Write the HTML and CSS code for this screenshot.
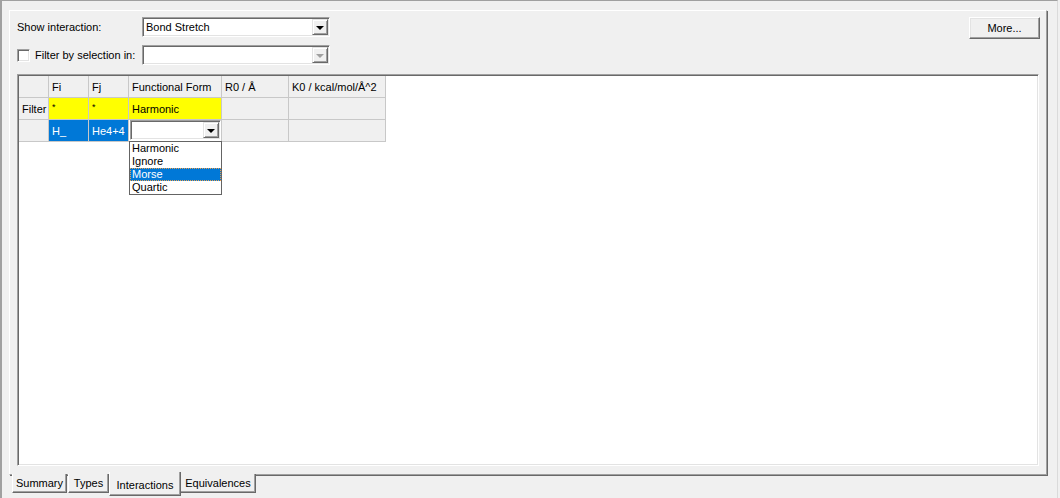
FILE: index.html
```html
<!doctype html>
<html lang="en">

<head>
    <meta charset="UTF-8">
    <title>Interactions</title>
    <link rel="stylesheet" href="styles.css">
</head>

<body>
    <div class="frame">
        <div class="tab-page">
            <div class="form-row">
                <label class="field-label">Show interaction:</label>
                <div class="combo">
                    <span class="combo-text">Bond Stretch</span>
                    <span class="combo-btn"><span class="arrow"></span></span>
                </div>
                <button class="btn more">More...</button>
            </div>
            <div class="form-row second">
                <span class="checkbox"></span>
                <label class="field-label short">Filter by selection in:</label>
                <div class="combo disabled">
                    <span class="combo-text"></span>
                    <span class="combo-btn"><span class="arrow"></span></span>
                </div>
            </div>

            <div class="grid-box">
                <table class="grid">
                    <tr class="head">
                        <td class="c0"></td>
                        <td class="c1">Fi</td>
                        <td class="c2">Fj</td>
                        <td class="c3">Functional Form</td>
                        <td class="c4">R0 / Å</td>
                        <td class="c5">K0 / kcal/mol/Å^2</td>
                    </tr>
                    <tr>
                        <td class="fixed">Filter</td>
                        <td class="filter"><span class="star">*</span></td>
                        <td class="filter"><span class="star">*</span></td>
                        <td class="filter">Harmonic</td>
                        <td class="fixed"></td>
                        <td class="fixed"></td>
                    </tr>
                    <tr>
                        <td class="fixed"></td>
                        <td class="selected">H_</td>
                        <td class="selected">He4+4</td>
                        <td class="editor">
                            <div class="cell-combo">
                                <span class="combo-text"></span>
                                <span class="combo-btn"><span class="arrow"></span></span>
                            </div>
                            <ul class="drop-list">
                                <li>Harmonic</li>
                                <li>Ignore</li>
                                <li class="hot">Morse</li>
                                <li>Quartic</li>
                            </ul>
                        </td>
                        <td class="fixed"></td>
                        <td class="fixed"></td>
                    </tr>
                </table>
            </div>
        </div>

        <ul class="tabs">
            <li class="tab t-summary">Summary</li>
            <li class="tab t-types">Types</li>
            <li class="tab t-inter active">Interactions</li>
            <li class="tab t-equiv">Equivalences</li>
        </ul>
    </div>
</body>

</html>
```

FILE: styles.css
```css
*,
*:after,
*:before {
    box-sizing: border-box;
    padding: 0;
    margin: 0;
}

body {
    font: 11px "Liberation Sans", Arial, sans-serif;
    color: #000;
    background: #f0f0f0;
    width: 1060px;
    height: 498px;
    overflow: hidden;
}

ul {
    list-style: none;
}

.frame {
    height: 498px;
    border-top: 1px solid #a0a0a0;
    border-left: 2px solid #a0a0a0;
    border-right: 1px solid #dadada;
    width: 1058px;
}

/* the page of the tab control */
.tab-page {
    margin: 9px 0 0 7px;
    width: 1038px;
    height: 465px;
    border-top: 1px solid #fff;
    border-left: 1px solid #fff;
    border-right: 1px solid #a0a0a0;
    border-bottom: 1px solid #a0a0a0;
    box-shadow: 1px 1px 0 #696969;
    padding: 6px 6px 0 7px;
}

.form-row {
    display: flex;
    align-items: center;
    height: 20px;
}

.form-row.second {
    margin-top: 8px;
}

.field-label {
    width: 125px;
}

.field-label.short {
    width: 107px;
}

.combo {
    position: relative;
    width: 188px;
    height: 20px;
    background: #fff;
    border-top: 1px solid #a0a0a0;
    border-left: 1px solid #a0a0a0;
    border-right: 1px solid #fff;
    border-bottom: 1px solid #fff;
    box-shadow: inset 1px 1px 0 #696969, inset -1px -1px 0 #e3e3e3;
    display: flex;
    align-items: center;
}

.combo-text {
    flex: 1;
    padding-left: 3px;
}

.combo-btn {
    width: 16px;
    height: 16px;
    margin-right: 1px;
    background: #f0f0f0;
    border-top: 1px solid #e3e3e3;
    border-left: 1px solid #e3e3e3;
    border-right: 1px solid #696969;
    border-bottom: 1px solid #696969;
    box-shadow: inset 1px 1px 0 #fff, inset -1px -1px 0 #a0a0a0;
    display: flex;
    align-items: center;
    justify-content: center;
}

.arrow {
    width: 0;
    height: 0;
    border-left: 4px solid transparent;
    border-right: 4px solid transparent;
    border-top: 4px solid #000;
    margin-top: 1px;
}

.combo.disabled .arrow {
    border-top-color: #a0a0a0;
}

.btn {
    font: 11px "Liberation Sans", Arial, sans-serif;
    background: #f0f0f0;
    border-top: 1px solid #fff;
    border-left: 1px solid #fff;
    border-right: 1px solid #696969;
    border-bottom: 1px solid #696969;
    box-shadow: inset -1px -1px 0 #a0a0a0, inset 1px 1px 0 #e3e3e3;
}

.more {
    width: 71px;
    height: 22px;
    margin-left: auto;
    align-self: flex-start;
}

.checkbox {
    width: 13px;
    height: 13px;
    background: #fff;
    border-top: 1px solid #a0a0a0;
    border-left: 1px solid #a0a0a0;
    border-right: 1px solid #fff;
    border-bottom: 1px solid #fff;
    box-shadow: inset 1px 1px 0 #696969, inset -1px -1px 0 #e3e3e3;
    margin-right: 5px;
}

/* grid */
.grid-box {
    margin-top: 9px;
    width: 1022px;
    height: 392px;
    background: #fff;
    border-top: 1px solid #a0a0a0;
    border-left: 1px solid #a0a0a0;
    border-right: 1px solid #fff;
    border-bottom: 1px solid #fff;
    box-shadow: inset 1px 1px 0 #696969, inset -1px -1px 0 #e3e3e3;
    padding: 1px 0 0 1px;
}

.grid {
    border-collapse: separate;
    border-spacing: 0;
    table-layout: fixed;
    width: 367px;
}

.c0 { width: 30px; }
.c1 { width: 40px; }
.c2 { width: 40px; }
.c3 { width: 93px; }
.c4 { width: 67px; }
.c5 { width: 97px; }

.grid td {
    height: 22px;
    padding: 0 0 0 3px;
    border-right: 1px solid #c8c8c8;
    border-bottom: 1px solid #c8c8c8;
    white-space: nowrap;
    overflow: visible;
    background: #fff;
}

.grid .head td,
.grid td.fixed {
    background: #f0f0f0;
}

.grid td.filter {
    background: #ffff00;
}

.star {
    font-size: 9px;
    position: relative;
    top: -3px;
}

.grid td.selected {
    background: #0078d7;
    color: #fff;
}

.grid td.editor {
    position: relative;
    padding: 0;
    vertical-align: top;
}

.cell-combo {
    margin-left: 1px;
    width: 91px;
    height: 20px;
    background: #fff;
    border-top: 1px solid #a0a0a0;
    border-left: 1px solid #a0a0a0;
    border-right: 1px solid #fff;
    border-bottom: 1px solid #fff;
    box-shadow: inset 1px 1px 0 #696969, inset -1px -1px 0 #e3e3e3;
    display: flex;
    align-items: center;
}

.drop-list {
    position: absolute;
    top: 21px;
    left: 0;
    width: 93px;
    background: #fff;
    border: 1px solid #646464;
    z-index: 2;
}

.drop-list li {
    height: 13px;
    line-height: 13px;
    padding-left: 2px;
}

.drop-list li.hot {
    background: #0078d7;
    color: #fff;
    outline: 1px dotted #e8a050;
    outline-offset: -1px;
}

/* tabs along the bottom */
.tabs {
    display: flex;
    align-items: flex-start;
    margin: -1px 0 0 10px;
}

.tab {
    height: 19px;
    padding-top: 3px;
    text-align: center;
    background: #f0f0f0;
    border-left: 1px solid #fff;
    border-right: 1px solid #696969;
    border-bottom: 1px solid #696969;
    box-shadow: inset -1px -1px 0 #a0a0a0;
    margin-right: 1px;
    position: relative;
}

.t-summary { width: 55px; }
.t-types { width: 41px; }
.t-inter { width: 72px; }
.t-equiv { width: 76px; }

.tab.active {
    height: 24px;
    margin: -2px -1px 0 -1px;
    padding-top: 7px;
    z-index: 1;
}
```
